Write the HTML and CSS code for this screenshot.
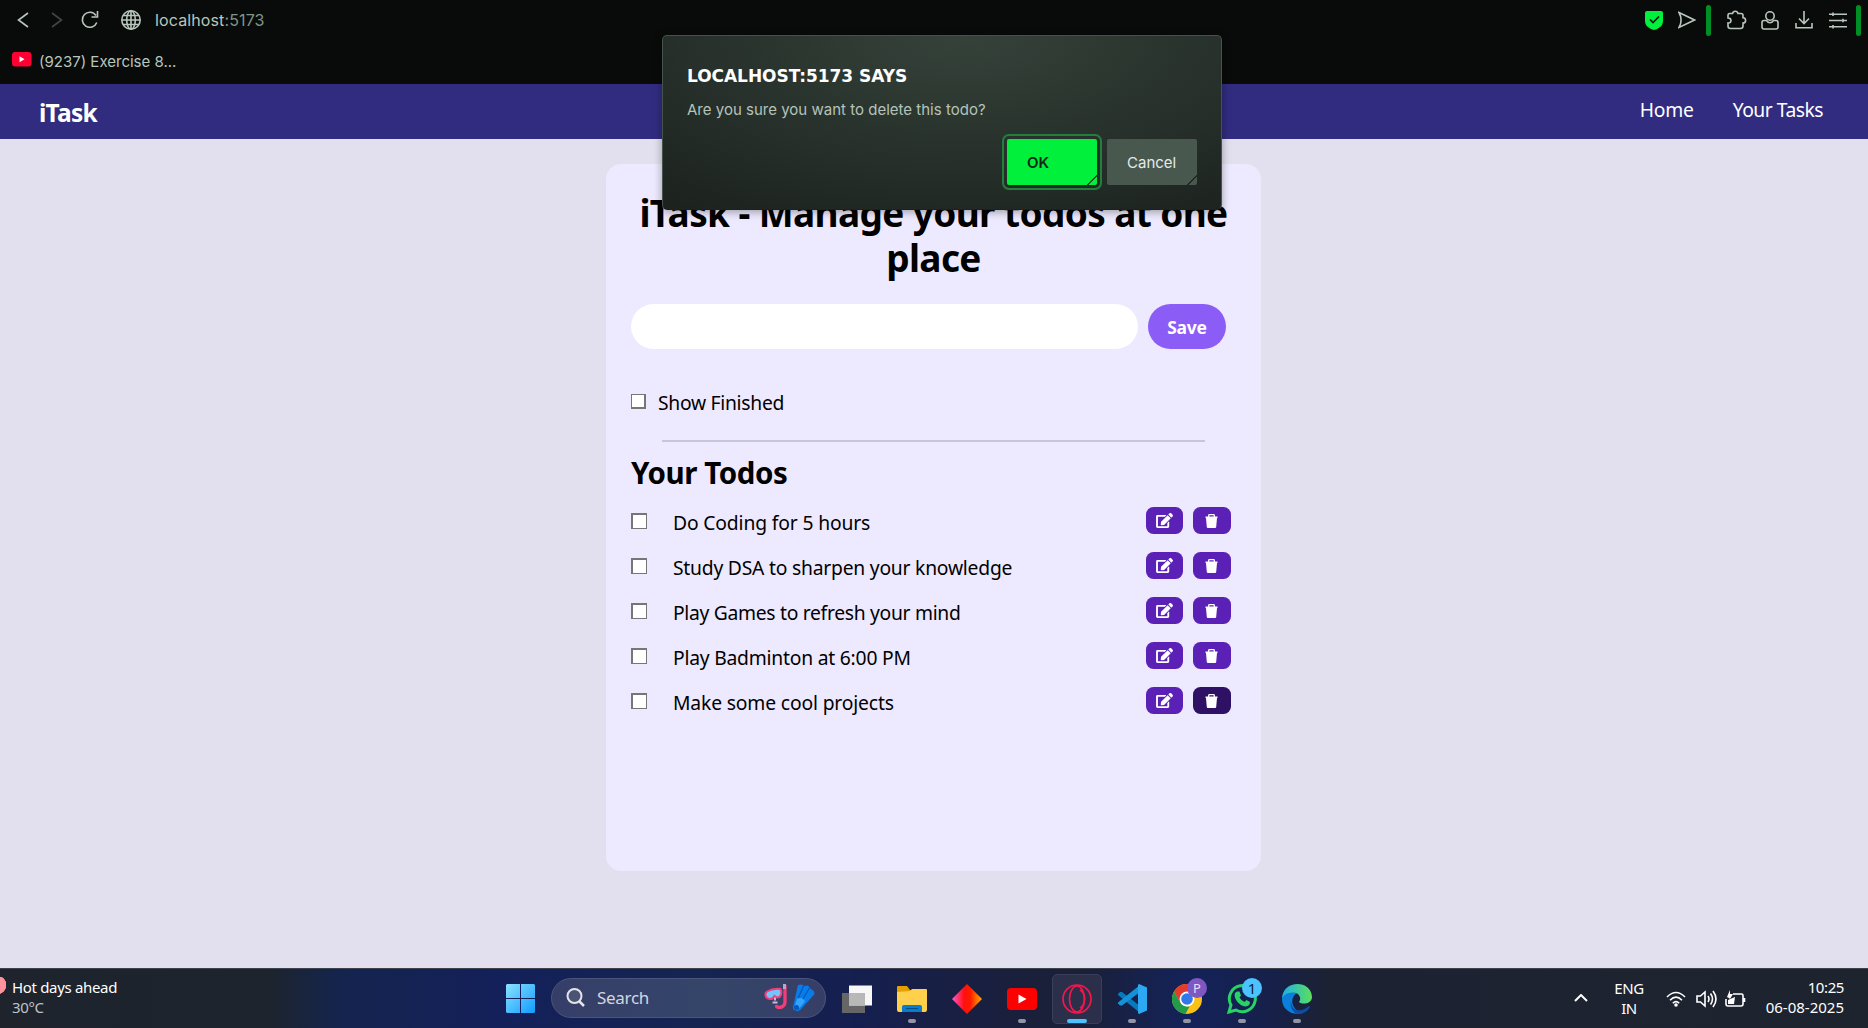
FILE: index.html
```html
<!DOCTYPE html>
<html lang="en">
<head>
<meta charset="utf-8">
<title>iTask</title>
<link rel="stylesheet" href="styles.css">
</head>
<body>
<svg class="defs" width="0" height="0" aria-hidden="true">
  <symbol id="edit" viewBox="0 0 576 512"><path fill="currentColor" d="M402.6 83.2l90.2 90.2c3.8 3.8 3.8 10 0 13.8L274.4 405.6l-92.8 10.3c-12.4 1.4-22.9-9.1-21.5-21.5l10.3-92.8L388.8 83.2c3.8-3.8 10-3.8 13.8 0zm162-22.9l-48.8-48.8c-15.2-15.2-39.9-15.2-55.2 0l-35.4 35.4c-3.8 3.8-3.8 10 0 13.8l90.2 90.2c3.8 3.8 10 3.8 13.8 0l35.4-35.4c15.2-15.3 15.2-40 0-55.2zM384 346.2V448H64V128h229.8c3.2 0 6.2-1.3 8.5-3.5l40-40c7.6-7.6 2.2-20.5-8.500-20.500H48C21.500 64 0 85.500 0 112v352c0 26.500 21.500 48 48 48h352c26.500 0 48-21.500 48-48V306.200c0-10.700-12.900-16-20.500-8.500l-40 40c-2.200 2.300-3.500 5.300-3.500 8.500z"/></symbol>
  <symbol id="trash" viewBox="0 0 13 14"><path fill="none" stroke="currentColor" stroke-width="1.300" d="M3.700 3V1.400q0-.7.700-.7h4.200q.7 0 .7.700V3"/><path fill="currentColor" d="M.5 2.500h12V4H12l-.8 9q-.1 1-1.100 1H2.900q-1 0-1.100-1L1 4H.5z"/></symbol>
</svg>

<header class="chrome">
  <div class="toolbar">
    <svg class="back" width="12" height="16" viewBox="0 0 12 16"><path d="M11 1 1.500 8 11 15"/></svg>
    <svg class="forward" width="12" height="16" viewBox="0 0 12 16"><path d="M1 1l9.500 7L1 15"/></svg>
    <svg class="reload" width="18" height="18" viewBox="0 0 18 18"><path d="M15.800 11.500A7.500 7.500 0 1 1 15 4.500M16.500 0v6h-6"/></svg>
    <svg class="globe" width="20" height="20" viewBox="0 0 20 20"><circle cx="10" cy="10" r="9.200"/><ellipse cx="10" cy="10" rx="4.300" ry="9.200"/><path d="M10 1v18M1 10h18M2.200 5.500h15.600M2.200 14.500h15.600"/></svg>
    <span class="address">localhost<span class="port">:5173</span></span>
    <div class="tools">
      <svg class="shield" width="18" height="19" viewBox="0 0 18 19"><path class="fill" d="M2 0h14a2 2 0 0 1 2 2v8c0 5-4 7.500-9 9-5-1.500-9-4-9-9V2a2 2 0 0 1 2-2z"/><path class="tick" d="M5 8.500l3 3 6-6"/></svg>
      <svg class="send" width="18" height="18" viewBox="0 0 18 18"><path d="M1 1.500 16.500 9 1 16.500C3.500 12 3.500 6 1 1.500z"/></svg>
      <i class="bar"></i>
      <svg class="puzzle" width="21" height="20" viewBox="0 0 21 20"><path d="M3.500 3.500H6.500a2.800 2.800 0 0 1 5.500 0H15q2 0 2 2v2.300a2.600 2.600 0 0 1 0 5.200V16q0 2.500-2.500 2.500h-10Q2 18.500 2 16v-3c4 .5 4-5 0-5V5.500q0-2 1.500-2z"/></svg>
      <svg class="person" width="18" height="19" viewBox="0 0 18 19"><circle cx="9" cy="5" r="4.200"/><path d="M5.500 9.500H3a2 2 0 0 0-2 2V16a2 2 0 0 0 2 2h12a2 2 0 0 0 2-2v-4.500a2 2 0 0 0-2-2h-2.500c-2 3-5 3-7 0z"/></svg>
      <svg class="download" width="18" height="18" viewBox="0 0 18 18"><path d="M9 0v12M4 7.500l5 5 5-5M1 12v4.800h16V12"/></svg>
      <svg class="sliders" width="18" height="17" viewBox="0 0 18 17"><path d="M0 2.200h18M0 8.500h18M0 14.800h18M4 .5V4M14 6.800v3.500M4 13v3.500"/></svg>
      <i class="bar last"></i>
    </div>
  </div>
  <div class="bookmarks">
    <svg width="20" height="15" viewBox="0 0 20 15"><rect width="19.500" height="14.500" rx="3" fill="#ff0033"/><path d="M7.500 4.300v6l5-3z" fill="#fff"/></svg>
    <span>(9237) Exercise 8...</span>
  </div>
</header>

<nav class="nav">
  <span class="brand">iTask</span>
  <span class="link home">Home</span>
  <span class="link tasks">Your Tasks</span>
</nav>

<main class="page">
  <section class="card">
    <h1>iTask - Manage your todos at one<br>place</h1>
    <div class="entry"><div class="field"></div><div class="save">Save</div></div>
    <div class="show"><i class="check small"></i><span>Show Finished</span></div>
    <div class="rule"></div>
    <h2>Your Todos</h2>
    <div class="todo"><i class="check"></i><span class="text coding">Do Coding for 5 hours</span><b class="btn"><svg class="edit"><use href="#edit"/></svg></b><b class="btn del"><svg class="trash"><use href="#trash"/></svg></b></div>
    <div class="todo"><i class="check"></i><span class="text">Study DSA to sharpen your knowledge</span><b class="btn"><svg class="edit"><use href="#edit"/></svg></b><b class="btn del"><svg class="trash"><use href="#trash"/></svg></b></div>
    <div class="todo"><i class="check"></i><span class="text games">Play Games to refresh your mind</span><b class="btn"><svg class="edit"><use href="#edit"/></svg></b><b class="btn del"><svg class="trash"><use href="#trash"/></svg></b></div>
    <div class="todo"><i class="check"></i><span class="text">Play Badminton at 6:00 PM</span><b class="btn"><svg class="edit"><use href="#edit"/></svg></b><b class="btn del"><svg class="trash"><use href="#trash"/></svg></b></div>
    <div class="todo"><i class="check"></i><span class="text coding">Make some cool projects</span><b class="btn"><svg class="edit"><use href="#edit"/></svg></b><b class="btn del pressed"><svg class="trash"><use href="#trash"/></svg></b></div>
  </section>
</main>

<div class="dialog">
  <div class="says">LOCALHOST:5173 SAYS</div>
  <div class="ask">Are you sure you want to delete this todo?</div>
  <div class="actions"><div class="action ok">OK</div><div class="action cancel">Cancel</div></div>
</div>

<footer class="taskbar">
  <div class="weather">Hot days ahead<br><span class="temp">30°C</span></div>
  <svg class="start" width="29" height="29" viewBox="0 0 29 29"><defs><linearGradient id="win" x1="0" y1="0" x2="1" y2="1"><stop offset="0" stop-color="#8ae2ff"/><stop offset="1" stop-color="#109cff"/></linearGradient></defs><path fill="url(#win)" d="M1 0h13v14H0V1zM15 0h13l1 1v13H15zM0 15h14v14H1l-1-1zM15 15h14v13l-1 1H15z"/></svg>
  <div class="search">
    <svg width="20" height="20" viewBox="0 0 20 20"><circle cx="8.500" cy="8" r="7" fill="#4b5573" stroke="#e4e5ea" stroke-width="2"/><path d="M13.500 13.500l4.500 4.500" stroke="#e4e5ea" stroke-width="2.500"/></svg>
    <span>Search</span>
    <svg class="gear" width="51" height="28" viewBox="0 0 51 28"><path d="M21 2v16a5.500 5.500 0 0 1-8.500 4.500" fill="none" stroke="#f43c78" stroke-width="3.300" stroke-linecap="round"/><path d="M20.500 0v5" stroke="#b6a6c8" stroke-width="3"/><path d="M3 7.500Q9 4 16.500 5q1.500 3 .5 6-1.500 3-4 2.500L10.500 12Q9 15.500 5.500 15 1 14 1.500 9.500z" fill="#70c7ff" stroke="#f43c78" stroke-width="2"/><path d="M8.500 18.500h5M11 13.500v3" stroke="#cbb8d8" stroke-width="2"/><path d="M34 1l4-.5 2 1.500 4-.5L46 4l4 3.500L50.500 10 38 24q-3 5-8 2-2-2-.5-5z" fill="#087de9"/><path d="M39.500 2L33 17M45.500 4L37 18" stroke="#0757bd" stroke-width="1.300"/><path d="M33 14.500q6-2 8 3l-5 6q-3.500 2-5-2z" fill="#35a3fa"/><circle cx="32.500" cy="23.500" r="2.500" fill="#0757bd"/></svg>
  </div>
  <div class="apps">
    <div class="app"><svg width="32" height="30" viewBox="0 0 32 30"><path fill="#666" d="M1 9h23v20H1z"/><path fill="#f7f7f7" d="M8 1.500h23v20H8z"/><path fill="#b8b8b8" d="M8 9h16v12.500H8z"/></svg></div>
    <div class="app run"><svg width="30" height="28" viewBox="0 0 30 28"><path fill="#e5a000" d="M0 2Q0 1 1 1h9l3 4h16v9H0z"/><path fill="#ffd04b" d="M0 7l13-1 2-2h14q1 0 1 1v20q0 2-2 2H2q-2 0-2-2z"/><path fill="#087dd0" d="M5 27v-5q0-2 2-2h16q2 0 2 2v5z"/><path stroke="#084d86" d="M9 23.500h12"/></svg></div>
    <div class="app"><svg width="30" height="30" viewBox="0 0 30 30"><defs><linearGradient id="dia"><stop offset="0" stop-color="#ff58d5"/><stop offset=".4" stop-color="#ff1010"/><stop offset=".6" stop-color="#ff1900"/><stop offset="1" stop-color="#ffae00"/></linearGradient></defs><path fill="url(#dia)" d="M15 0l15 15-15 15L0 15z"/></svg></div>
    <div class="app run"><svg width="30" height="22" viewBox="0 0 30 22"><rect width="30" height="22" rx="4" fill="#f00"/><path fill="#fff" d="M11.500 6.500v9l8-4.500z"/></svg></div>
    <div class="app active"><svg width="30" height="30" viewBox="0 0 30 30" fill="none" stroke="#f5164e" stroke-width="1.700"><circle cx="15" cy="15" r="14"/><ellipse cx="15" cy="15" rx="7.500" ry="13"/><path d="M18 6c6 3 6 15 0 18"/></svg></div>
    <div class="app run"><svg width="30" height="30" viewBox="0 0 30 30"><path fill="#0879bd" d="M1 10l2-2 2 0 18 14v7L1 11z"/><path fill="#1492d9" d="M1 19.500l2 2h2L23 8V1L1 18.500z"/><path fill="#2ca9f2" d="M22 0l8 3.500v23L22 30l-1-1V1z"/></svg></div>
    <div class="app run"><svg width="30" height="30" viewBox="0 0 30 30"><circle cx="15" cy="15" r="15" fill="#fbc116"/><path fill="#e33b2e" d="M2 7.500a15 15 0 0 1 26 0H15L8.500 19z"/><path fill="#229b4b" d="M2 7.500L8.500 18.800q2.500 3.700 6.500 3.700h2.500L13.500 30A15 15 0 0 1 2 7.500z"/><circle cx="15" cy="15" r="7.500" fill="#fff"/><circle cx="15" cy="15" r="5.800" fill="#3278e9"/></svg><em class="badge profile">P</em></div>
    <div class="app run"><svg width="30" height="30" viewBox="0 0 30 30"><path fill="none" stroke="#25d366" stroke-width="3" d="M2 28l2-7A13 13 0 1 1 9 26z"/><path fill="#25d366" d="M10 7.500l2.500 0 1.500 4-1.500 2q2 3.500 5 4.500l2-2 3.500 2q0 4-4.500 4.500C12 22 6 14 8 9z"/></svg><em class="badge count">1</em></div>
    <div class="app run"><svg width="30" height="30" viewBox="0 0 30 30"><defs><linearGradient id="ed" x1="0" x2="1"><stop offset="0" stop-color="#20aee9"/><stop offset="1" stop-color="#5be05a"/></linearGradient></defs><path fill="#0b7fdc" d="M0 15C1 7 10 6 15 9c-6 3-7 13 1 18l4 2.200C9 32 0 25 0 15z"/><path fill="#0d4ea3" d="M9 17c0 9 9 13 18 5l1 1C20 36 6 29 9 17z"/><path fill="url(#ed)" d="M0 15C0-4 29-5 30 13c0 7-10 8-13 5 3-4 0-9-5-9.500C6 8 1 11 0 15z"/></svg></div>
  </div>
  <div class="tray">
    <svg class="chev" width="14" height="8" viewBox="0 0 14 8"><path d="M1 7l6-6 6 6"/></svg>
    <div class="lang">ENG<br>IN</div>
    <svg class="wifi" width="20" height="16" viewBox="0 0 20 16"><path d="M1 6q9-9 18 0M4 9.200q6-6 12 0M6.800 12.200q3.200-3.200 6.400 0"/><circle cx="10" cy="14" r="1.800" fill="#fff" stroke="none"/></svg>
    <svg class="sound" width="21" height="18" viewBox="0 0 21 18"><path d="M1 6h3.500L9 2v14l-4.500-4H1zM12 6q2 3 0 6M14.500 3.500q4 5.500 0 11M17 1q6 8 0 16"/></svg>
    <svg class="battery" width="21" height="18" viewBox="0 0 21 18"><path d="M8 4h8.500q1.500 0 1.500 1.500V14q0 2-2 2H3q-2 0-2-2V9M19.500 8v4"/><path fill="#fff" stroke="none" d="M4 8L2 7l3-7v4h3L5 9zM3 10l7-3-1 7H3z"/></svg>
    <div class="clock"><span class="time">10:25</span><br>06-08-2025</div>
  </div>
</footer>
</body>
</html>
```
FILE: styles.css
```css
* { box-sizing: border-box; }
body { margin: 0; width: 1868px; height: 1028px; overflow: hidden; display: flex; flex-direction: column; position: relative; font-family: "Noto Sans", sans-serif; font-size: 19.3px; line-height: 30px; color: #000; background: #e2e0ee; }
svg { display: block; flex: none; }
.defs { position: absolute; }
span { white-space: nowrap; }

.chrome { height: 84px; flex: none; background: #080b0a; color: #b9c6bd; font-family: Inter, sans-serif; }
.toolbar { height: 40px; display: flex; align-items: center; padding-left: 17px; }
.toolbar svg { fill: none; stroke: #b9c6bd; stroke-width: 1.6; }
.toolbar .forward { margin-left: 22px; stroke: #414744; }
.reload { margin-left: 18px; }
.globe { margin-left: 22px; }
.address { margin-left: 14px; font-size: 16px; letter-spacing: .12px; }
.port { color: #7f9586; }
.tools { margin-left: auto; display: flex; align-items: center; height: 40px; }
.toolbar .shield { stroke: none; }
.toolbar .shield .fill { fill: #00f03c; }
.toolbar .shield .tick { stroke: #06140a; stroke-width: 1.7; }
.send { margin-left: 15px; }
.bar { width: 5px; height: 31px; border-radius: 2.5px; background: #008f24; margin-left: 10px; }
.puzzle { margin-left: 15px; }
.person { margin-left: 14px; }
.download { margin-left: 16px; }
.sliders { margin-left: 16px; }
.bar.last { margin: 0 7px 0 9px; }
.bookmarks { display: flex; align-items: center; height: 43px; padding-left: 12px; gap: 7px; font-size: 15px; }
.bookmarks svg { margin-top: -4px; }

.nav { height: 55px; flex: none; background: #312c7f; color: #fff; display: flex; align-items: flex-start; padding: 11px 45px 0 39px; }
.brand { font-size: 24.5px; line-height: 35px; font-weight: 700; letter-spacing: -.73px; margin-right: auto; }
.link { line-height: 30px; }
.home { margin-right: 39px; letter-spacing: -.2px; }
.tasks { letter-spacing: -.5px; }

.page { height: 829px; flex: none; padding-top: 25px; }
.card { width: 655px; height: 707px; margin-left: 606px; padding: 26px 25px 25px; border-radius: 15px; background: #ede9fe; }
h1 { margin: 0; font-size: 37px; line-height: 45px; font-weight: 700; letter-spacing: -.62px; text-align: center; white-space: nowrap; }
.entry { display: flex; gap: 10px; margin-top: 24px; }
.field { width: 507px; height: 45px; border-radius: 22.5px; background: #fff; }
.save { width: 78px; height: 45px; border-radius: 22.5px; background: #8b5cf6; color: #fff; font-size: 17.5px; font-weight: 700; letter-spacing: -.27px; line-height: 47px; text-align: center; }
.show { display: flex; margin-top: 39px; height: 30px; letter-spacing: -.28px; }
.check { width: 16px; height: 16px; flex: none; background: #fff; border: 1px solid #767676; border-width: 2px 1px 1px 2px; margin-top: 5px; }
.check.small { width: 15px; height: 15px; border-width: 1px 2px 2px 1px; margin: 6px 12px 0 0; }
.rule { width: 543px; height: 2px; margin: 22px 0 0 31px; background: #c9c5d8; }
h2 { margin: 11px 0 15px; font-size: 29.5px; line-height: 40px; font-weight: 700; letter-spacing: -.43px; }
.todo { display: flex; height: 45px; width: 600px; }
.text { margin: 0 auto 0 26px; letter-spacing: -.22px; }
.coding { letter-spacing: -.15px; }
.games { letter-spacing: -.3px; }
.btn { width: 37px; height: 27px; margin-top: -1px; border-radius: 7.5px; background: #5b21b6; color: #fff; display: flex; align-items: center; justify-content: center; }
.btn.del { width: 38px; margin-left: 10px; padding-right: 1px; }
.btn.pressed { background: #2e1065; }
.edit { width: 17px; height: 15px; }
.trash { width: 13px; height: 14px; }

.dialog { position: absolute; left: 662px; top: 35px; width: 560px; height: 175px; border-radius: 5px; border: 1px solid #45534a; border-bottom-color: #1b211d; background: radial-gradient(ellipse 90% 130% at 54% 0, #35423a, #1b211d); padding: 24px 24px 0; font-family: Inter, sans-serif; box-shadow: 0 2px 8px rgba(0,0,0,.35); white-space: nowrap; }
.says { font-family: "DejaVu Sans", sans-serif; font-size: 17px; font-weight: 700; letter-spacing: -.05px; line-height: 32px; color: #fff; }
.ask { font-size: 15px; line-height: 34px; color: #b5c3ba; margin-top: 1px; letter-spacing: .01px; }
.actions { display: flex; justify-content: flex-end; gap: 10px; margin-top: 12px; }
.action { width: 90px; height: 46px; border-radius: 2px; font-size: 15px; line-height: 47px; padding-left: 20px; }
.ok { background: linear-gradient(135deg, transparent 92%, #0b4d1c 92%, #0b4d1c 93.5%, transparent 93.5%), #00f03c; color: #10251a; font-weight: 600; outline: 2px solid #237f3c; outline-offset: 3px; }
.cancel { background: linear-gradient(135deg, transparent 92%, #202923 92%, #202923 93.5%, transparent 93.5%), #48584e; color: #e3ebe6; }

.taskbar { height: 60px; flex: none; display: flex; align-items: center; border-top: 1px solid #3e424d; color: #fff; font-size: 15px; line-height: 20px; background: linear-gradient(90deg, #1e232c 0, #1d242e 270px, #14244e 340px, #14205a 500px, #152451 700px, #151f50 850px, #1a1f3c 1010px, #1a2038 1080px, #14225a 1190px, #16204a 1270px, #1c2232 1330px, #1e242e 100%); }
.weather { width: 506px; padding-left: 12px; margin-top: -4px; letter-spacing: -.33px; background: radial-gradient(circle 9.5px at -3px 8px, #ff929c 96%, transparent); }
.temp { color: #bfc3c8; }
.search { width: 275px; height: 40px; margin: -1px 15px 0 16px; border-radius: 20px; border: 1px solid #4b557a; background: linear-gradient(90deg, #363e68, #34456a 60%, #373e66); display: flex; align-items: center; padding: 0 10px 0 14px; font-size: 17px; letter-spacing: -.3px; color: #d3d6e0; }
.search span { margin: 0 auto 0 11px; }
.apps { display: flex; gap: 5px; margin-left: -9px; }
.app { width: 50px; height: 50px; border-radius: 5px; display: flex; align-items: center; justify-content: center; position: relative; }
.app.active { background: #2b2f4a; border: 1px solid #3a3e58; }
.run::after, .active::after { content: ""; position: absolute; bottom: 1px; left: 21px; width: 8px; height: 4px; border-radius: 2px; background: #9295a3; }
.active::after { width: 20px; left: 14px; bottom: 0; background: #4cc2ff; }
.badge { position: absolute; top: 4px; right: 5px; width: 20px; height: 20px; border-radius: 50%; text-align: center; font-style: normal; font-size: 13px; line-height: 20px; background: #7e57c2; color: #e9ddff; }
.count { background: #4cc2ff; color: #0c2230; font-size: 15px; }
.tray { margin-left: auto; display: flex; align-items: center; padding-right: 24px; }
.tray svg { fill: none; stroke: #fff; stroke-width: 1.6; }
.tray .chev { margin-top: -2px; stroke-width: 2; }
.lang { width: 78px; padding-left: 4px; margin-top: -2px; text-align: center; letter-spacing: -.4px; }
.wifi { margin-right: 10px; }
.sound { margin-right: 8px; }
.clock { width: 98px; margin-top: -4px; text-align: right; }
.time { letter-spacing: -.4px; }
```
